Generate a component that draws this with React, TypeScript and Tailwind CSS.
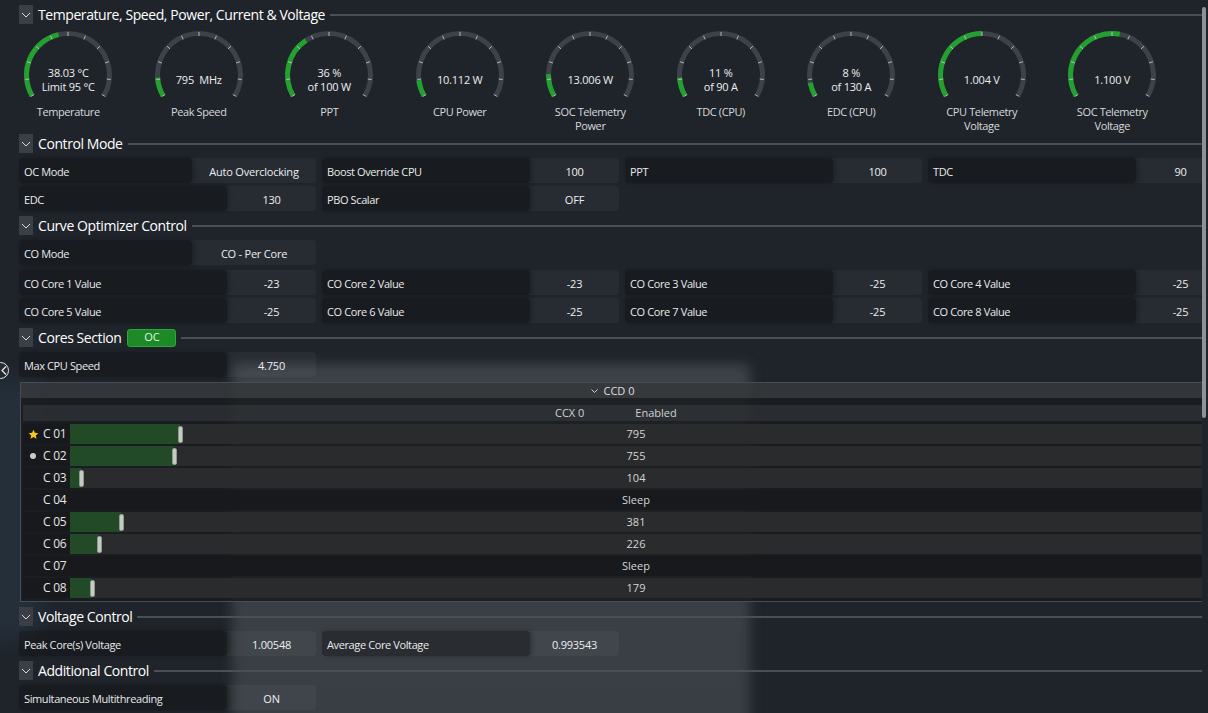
import React from 'react';

// Gauge geometry (svg 100x80)
const CX = 50;
const CY = 51;
const R = 41.5;

const pt = (deg: number, r: number) => {
  const a = (deg * Math.PI) / 180;
  return [CX + r * Math.cos(a), CY - r * Math.sin(a)];
};

const arc = (from: number, to: number) => {
  const [x1, y1] = pt(from, R);
  const [x2, y2] = pt(to, R);
  const large = from - to > 180 ? 1 : 0;
  return `M ${x1.toFixed(2)} ${y1.toFixed(2)} A ${R} ${R} 0 ${large} 1 ${x2.toFixed(2)} ${y2.toFixed(2)}`;
};

type GaugeData = { lines: string[]; label: string[]; p: number };

const GAUGES: GaugeData[] = [
  { lines: ['38.03 °C', 'Limit 95 °C'], label: ['Temperature'], p: 0.445 },
  { lines: ['795  MHz'], label: ['Peak Speed'], p: 0.11 },
  { lines: ['36 %', 'of 100 W'], label: ['PPT'], p: 0.36 },
  { lines: ['10.112 W'], label: ['CPU Power'], p: 0.095 },
  { lines: ['13.006 W'], label: ['SOC Telemetry', 'Power'], p: 0.13 },
  { lines: ['11 %', 'of 90 A'], label: ['TDC (CPU)'], p: 0.11 },
  { lines: ['8 %', 'of 130 A'], label: ['EDC (CPU)'], p: 0.08 },
  { lines: ['1.004 V'], label: ['CPU Telemetry', 'Voltage'], p: 0.5 },
  { lines: ['1.100 V'], label: ['SOC Telemetry', 'Voltage'], p: 0.545 },
];

const Gauge: React.FC<{ g: GaugeData }> = ({ g }) => {
  const end = 210 - 240 * g.p;
  return (
    <div className="relative flex w-[130.5px] flex-col items-center">
      <svg width="100" height="80" viewBox="0 0 100 80">
        <path d={arc(210, -30)} fill="none" stroke="#3d4248" strokeWidth="5" />
        <path d={arc(210, end)} fill="none" stroke="#23a02f" strokeWidth="5" />
        {Array.from({ length: 11 }).map((_, k) => {
          const a = 210 - 24 * k;
          const [x1, y1] = pt(a, R - 2.5);
          const [x2, y2] = pt(a, R + 1.5);
          return (
            <line key={k} x1={x1} y1={y1} x2={x2} y2={y2} stroke="#c6cace" strokeOpacity="0.85" strokeWidth="1" />
          );
        })}
      </svg>
      {/* value overlay */}
      <div className="absolute inset-x-0 top-[36px] flex h-[40px] flex-col items-center justify-center text-[11px] leading-[14px] tracking-[-0.02em] text-[#eceef0]">
        {g.lines.map((l) => (
          <span key={l} className="whitespace-pre">{l}</span>
        ))}
      </div>
      <div className="mt-[1px] flex flex-col items-center text-[11px] leading-[14px] tracking-[-0.035em] text-[#d6d9dc]">
        {g.label.map((l) => (
          <span key={l}>{l}</span>
        ))}
      </div>
    </div>
  );
};

const Chevron: React.FC = () => (
  <div className="flex h-[19px] w-[14px] items-center justify-center bg-[#3a3f45]">
    <svg width="10" height="6" viewBox="0 0 10 6">
      <polyline points="1,1 5,5 9,1" fill="none" stroke="#d8dadc" strokeWidth="1" />
    </svg>
  </div>
);

const Header: React.FC<{ title: string; badge?: string; className?: string }> = ({ title, badge, className }) => (
  <div className={`flex h-[19px] items-center ${className ?? ''}`}>
    <Chevron />
    <span className="ml-[5px] whitespace-nowrap text-[14px] leading-[19px] tracking-[-0.03em] text-white">{title}</span>
    {badge && (
      <div className="ml-[6px] flex h-[18px] w-[49px] items-center justify-center rounded-[3px] border border-[#2aa83a] bg-[#1c8a27] text-[11px] text-[#e4f4e4]">
        {badge}
      </div>
    )}
    <div className="ml-[5px] h-[2px] flex-1 bg-[#4a4f56]" />
  </div>
);

const Field: React.FC<{ label: string; value: string; wide?: boolean }> = ({ label, value, wide }) => (
  <div className="flex h-[25px] w-[297px] rounded-[4px] bg-[#ffffff0a]">
    <div
      className={`flex items-center rounded-[4px] bg-[#0000005e] pl-[5px] pt-[3px] text-[11px] tracking-[-0.035em] text-[#e8eaec] shadow-[2px_0_4px_rgba(0,0,0,0.25)] ${
        wide ? 'w-[173px]' : 'w-[208px]'
      }`}
    >
      {label}
    </div>
    <div className="flex flex-1 items-center justify-center pt-[3px] text-[11px] tracking-[-0.02em] text-[#eceef0]">{value}</div>
  </div>
);

const Star: React.FC = () => (
  <svg width="11" height="11" viewBox="0 0 24 24">
    <path d="M12 1.5l3.1 6.9 7.4.7-5.6 5 1.7 7.4L12 17.6 5.4 21.5l1.7-7.4-5.6-5 7.4-.7z" fill="#f6c81c" />
  </svg>
);

const Dot: React.FC = () => <div className="h-[6px] w-[6px] rounded-full bg-[#c9cbcd]" />;

type Core = { name: string; value: number | null; icon?: 'star' | 'dot' };

const CORES: Core[] = [
  { name: 'C 01', value: 795, icon: 'star' },
  { name: 'C 02', value: 755, icon: 'dot' },
  { name: 'C 03', value: 104 },
  { name: 'C 04', value: null },
  { name: 'C 05', value: 381 },
  { name: 'C 06', value: 226 },
  { name: 'C 07', value: null },
  { name: 'C 08', value: 179 },
];

// bar fill in px, measured off the slider track
const fillPx = (v: number) => Math.max(0, v * 0.1429 - 3.6);

const CoreRow: React.FC<{ c: Core }> = ({ c }) => {
  const sleep = c.value === null;
  return (
    <div className="flex h-[20px]">
      <div className="flex w-[47px] items-center bg-[#17191c]">
        <div className="flex w-[20px] items-center justify-center">
          {c.icon === 'star' && <Star />}
          {c.icon === 'dot' && <Dot />}
        </div>
        <span className="text-[12px] tracking-[-0.02em] text-[#e4e6e8]">{c.name}</span>
      </div>
      <div className={`grid flex-1 ${sleep ? 'bg-[#17191c]' : 'bg-[#2a2b2c]'}`}>
        {!sleep && (
          <div className="col-start-1 row-start-1 flex items-center">
            <div className="h-full bg-[#234a27]" style={{ width: `${fillPx(c.value as number)}px` }} />
            <div className="-ml-[2px] h-[17px] w-[5px] rounded-[2px] border border-[#8e988e] bg-[#c3cbc3]" />
          </div>
        )}
        <div className="col-start-1 row-start-1 flex items-center justify-center pt-[1px] text-[11px] text-[#d4d6d8]">
          {sleep ? 'Sleep' : c.value}
        </div>
      </div>
    </div>
  );
};

const CoresTable: React.FC = () => (
  <div className="mt-[5px] ml-[1px] flex h-[220px] w-[1185px] flex-col border border-[#474d54] bg-[#191c20e0]">
    <div className="flex h-[15px] items-center justify-center gap-[6px] bg-[#ffffff1c] pt-[1px] text-[11px] text-[#dcdee0]">
      <svg width="7" height="5" viewBox="0 0 7 5">
        <polyline points="0.5,0.5 3.5,3.5 6.5,0.5" fill="none" stroke="#d0d2d4" strokeWidth="1" />
      </svg>
      <span>CCD 0</span>
    </div>
    <div className="mx-[2px] mt-[7px] flex h-[16px] items-center bg-[#ffffff12] pl-[532px] pt-[1px] text-[11px] text-[#cfd1d3]">
      <span>CCX 0</span>
      <span className="ml-[51px]">Enabled</span>
    </div>
    <div className="mx-[2px] mt-[3px] flex flex-col gap-[2px]">
      {CORES.map((c) => (
        <CoreRow key={c.name} c={c} />
      ))}
    </div>
  </div>
);

const GRID = 'grid grid-cols-[297px_297px_297px_297px] gap-x-[6px] gap-y-[3px]';

export default function App() {
  return (
    <div className="relative flex h-[713px] w-[1208px] overflow-hidden bg-[#1f242a] font-['Open_Sans','Noto_Sans',sans-serif] text-[#e8eaec]">
      {/* blurred window behind the acrylic panel */}
      <div className="absolute left-[232px] top-[364px] h-[380px] w-[518px] rounded-[6px] bg-gradient-to-b from-[#3d4248] to-[#393e44] blur-[6px]" />
      <div className="absolute left-[-20px] top-[380px] h-[260px] w-[60px] bg-[#2a3a4a] opacity-50 blur-[10px]" />

      {/* collapse button peeking in at left edge */}
      <div className="absolute left-[-8px] top-[362px] z-20 flex h-[17px] w-[17px] items-center justify-center rounded-full border border-[#e6e6e6] bg-[#262b31]">
        <svg width="6" height="9" viewBox="0 0 6 9" className="ml-[6px]">
          <polyline points="5,0.5 1,4.5 5,8.5" fill="none" stroke="#f0f0f0" strokeWidth="1.2" />
        </svg>
      </div>

      <div className="relative z-10 h-full w-[1202px] overflow-hidden pl-[19px] pt-[5px]">
        <Header title="Temperature, Speed, Power, Current & Voltage" />
        <div className="-ml-[16px] flex h-[110px]">
          {GAUGES.map((g) => (
            <Gauge key={g.label.join(' ')} g={g} />
          ))}
        </div>

        <Header title="Control Mode" />
        <div className={`mt-[5px] ${GRID}`}>
          <Field label="OC Mode" value="Auto Overclocking" wide />
          <Field label="Boost Override CPU" value="100" />
          <Field label="PPT" value="100" />
          <Field label="TDC" value="90" />
          <Field label="EDC" value="130" />
          <Field label="PBO Scalar" value="OFF" />
        </div>

        <Header title="Curve Optimizer Control" className="mt-[5px]" />
        <div className="mt-[5px]">
          <Field label="CO Mode" value="CO - Per Core" wide />
        </div>
        <div className={`mt-[5px] ${GRID}`}>
          <Field label="CO Core 1 Value" value="-23" />
          <Field label="CO Core 2 Value" value="-23" />
          <Field label="CO Core 3 Value" value="-25" />
          <Field label="CO Core 4 Value" value="-25" />
          <Field label="CO Core 5 Value" value="-25" />
          <Field label="CO Core 6 Value" value="-25" />
          <Field label="CO Core 7 Value" value="-25" />
          <Field label="CO Core 8 Value" value="-25" />
        </div>

        <Header title="Cores Section" badge="OC" className="mt-[5px]" />
        <div className="mt-[5px]">
          <Field label="Max CPU Speed" value="4.750" />
        </div>
        <CoresTable />

        <Header title="Voltage Control" className="mt-[5px]" />
        <div className={`mt-[5px] ${GRID}`}>
          <Field label="Peak Core(s) Voltage" value="1.00548" />
          <Field label="Average Core Voltage" value="0.993543" />
        </div>

        <Header title="Additional Control" className="mt-[5px]" />
        <div className="mt-[5px]">
          <Field label="Simultaneous Multithreading" value="ON" />
        </div>
      </div>

      {/* scrollbar */}
      <div className="relative z-10 w-[6px] pt-[7px]">
        <div className="h-[411px] w-[4px] rounded-[2px] bg-[#8e9297]" />
      </div>
    </div>
  );
}
